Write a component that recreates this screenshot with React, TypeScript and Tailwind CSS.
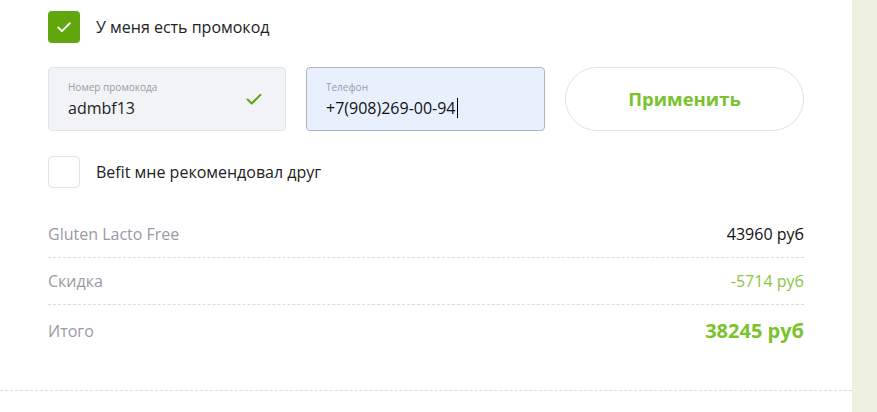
import React from "react";

function Check({ className }: { className?: string }) {
  return (
    <svg viewBox="0 0 24 24" className={className} fill="none" stroke="currentColor" strokeWidth={2.2} strokeLinecap="round" strokeLinejoin="round">
      <path d="M5 12.5l4.5 4.5L19 7.5" />
    </svg>
  );
}

export default function App() {
  return (
    <div className="flex w-[877px] h-[412px] bg-white overflow-hidden" style={{ fontFamily: '"Open Sans", "Noto Sans", sans-serif' }}>
      <div className="w-[852px] shrink-0 flex flex-col">
        <div className="pl-[48px] pr-[48px] pt-[11px]">
          <label className="flex items-center gap-[16px] h-[32px]">
            <span className="w-[32px] h-[32px] rounded-[4px] bg-[#5fa70c] flex items-center justify-center text-white">
              <Check className="w-[20px] h-[20px]" />
            </span>
            <span className="text-[16px] text-[#222]">У меня есть промокод</span>
          </label>

          <div className="flex gap-[20px] mt-[24px]">
            <div className="w-[238px] h-[64px] rounded-[4px] bg-[#f1f3f6] border border-[#e1e4e9] pl-[19px] pr-[20px] flex items-center">
              <div className="flex-1 flex flex-col pt-[2px]">
                <span className="text-[10px] leading-[12px] text-[#9a9ca3]">Номер промокода</span>
                <span className="text-[16px] leading-[22px] text-[#222] mt-[4px]">admbf13</span>
              </div>
              <Check className="w-[22px] h-[22px] text-[#5fa70c]" />
            </div>
            <div className="w-[239px] h-[64px] rounded-[4px] bg-[#e8f0fe] border border-[#aeb5c2] pl-[19px] pr-[16px] flex flex-col justify-center">
              <span className="text-[10px] leading-[12px] text-[#9a9ca3] pt-[2px]">Телефон</span>
              <span className="text-[16px] leading-[22px] text-[#111] mt-[4px] flex items-center">
                +7(908)269-00-94<span className="inline-block w-[1px] h-[20px] bg-black ml-[1px]"></span>
              </span>
            </div>
            <button className="w-[239px] h-[64px] rounded-full border border-[#e2e2e2] bg-white text-[18.5px] font-bold text-[#7ac22e]">
              Применить
            </button>
          </div>

          <label className="flex items-center gap-[16px] h-[32px] mt-[25px]">
            <span className="w-[32px] h-[32px] rounded-[4px] border border-[#e2e2e2] bg-white"></span>
            <span className="text-[16px] text-[#222]">Befit мне рекомендовал друг</span>
          </label>

          <div className="mt-[23px] flex flex-col">
            <div className="flex justify-between items-center h-[47px] border-b border-dashed border-[#dcdcdc]">
              <span className="text-[16px] text-[#9a9aa4]">Gluten Lacto Free</span>
              <span className="text-[16px] text-[#111]">43960 руб</span>
            </div>
            <div className="flex justify-between items-center h-[47px] border-b border-dashed border-[#dcdcdc]">
              <span className="text-[16px] text-[#9a9aa4]">Скидка</span>
              <span className="text-[16px] text-[#8cc63f]">-5714 руб</span>
            </div>
            <div className="flex justify-between items-center h-[52px]">
              <span className="text-[16px] text-[#9a9aa4]">Итого</span>
              <span className="text-[20px] font-bold text-[#7ac22e]">38245 руб</span>
            </div>
          </div>
        </div>
        <div className="mt-[33px] border-b border-dashed border-[#dcdcdc]"></div>
      </div>
      <div className="flex-1 bg-[#eef1e1]"></div>
    </div>
  );
}
